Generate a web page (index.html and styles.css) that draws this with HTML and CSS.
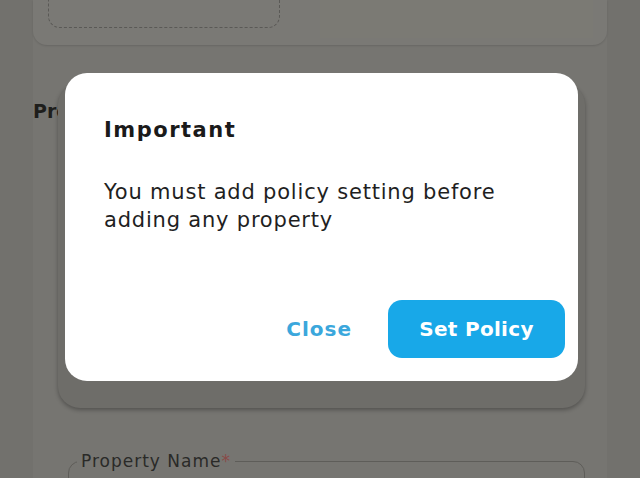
FILE: index.html
```html
<!DOCTYPE html>
<html>
<head>
<meta charset="utf-8">
<link rel="stylesheet" href="styles.css">
</head>
<body>
<div class="page">
  <div class="column">
    <div class="top-card">
      <div class="upload"></div>
      <div class="top-right"></div>
    </div>
    <h2 class="section-title">Property Details</h2>
    <div class="back-card"></div>
    <fieldset class="field">
      <legend>Property Name<span class="req">*</span></legend>
    </fieldset>
  </div>
</div>
<div class="dialog">
  <h3 class="dialog-title">Important</h3>
  <p class="dialog-body">You must add policy setting before adding any property</p>
  <div class="dialog-actions">
    <button class="btn-text">Close</button>
    <button class="btn-primary">Set Policy</button>
  </div>
</div>
</body>
</html>
```
FILE: styles.css
```css
html, body {
  margin: 0;
  padding: 0;
}
body {
  width: 640px;
  height: 478px;
  overflow: hidden;
  background: #72716d;
  font-family: "DejaVu Sans", "Open Sans", sans-serif;
}
.page {
  padding: 0 33px;
  height: 478px;
}
.column {
  background: #767571;
  height: 478px;
  display: flex;
  flex-direction: column;
}
.column > * {
  flex-shrink: 0;
}
.top-card {
  height: 45px;
  background: #7a7975;
  border-radius: 0 0 14px 14px;
  box-shadow: 0 1px 2px rgba(0,0,0,0.12);
  display: flex;
  gap: 40px;
  padding: 0 14px 0 15px;
  box-sizing: border-box;
}
.upload {
  width: 232px;
  height: 32px;
  margin-top: -4px;
  border: 1.5px dashed #5a5956;
  border-radius: 0 0 12px 12px;
  box-sizing: border-box;
}
.top-right {
  flex: 1;
  height: 38px;
  background: #7b7a74;
}
.section-title {
  margin: 54px 0 0 0;
  font-size: 19px;
  font-weight: 700;
  color: #1e1e1c;
  line-height: 24px;
}
.back-card {
  margin: -40px 22px 0 25px;
  height: 325px;
  border-radius: 22px;
  background: #6e6d69;
  box-shadow: 0 2px 4px rgba(0,0,0,0.3);
}
.field {
  margin: 43px 22px 0 35px;
  padding: 0;
  height: 40px;
  border: 1px solid #5e5d59;
  border-radius: 12px;
}
.field legend {
  margin-left: 8px;
  padding: 0 4px;
  font-size: 17px;
  letter-spacing: 1px;
  color: #2a2a28;
}
.req { color: #8a4a48; }

.dialog {
  position: absolute;
  left: 65px;
  top: 73px;
  width: 513px;
  height: 308px;
  box-sizing: border-box;
  background: #ffffff;
  border-radius: 22px;
  padding: 44px 13px 23px 39px;
  display: flex;
  flex-direction: column;
}
.dialog-title {
  margin: 0;
  font-size: 21px;
  line-height: 26px;
  font-weight: 700;
  letter-spacing: 1.5px;
  color: #1a1a1a;
}
.dialog-body {
  margin: 35px 20px 0 0;
  font-size: 21px;
  line-height: 28px;
  letter-spacing: 0.8px;
  color: #1f1f1f;
}
.dialog-actions {
  margin-top: auto;
  display: flex;
  justify-content: flex-end;
  align-items: center;
  gap: 36px;
}
.btn-text {
  border: none;
  background: none;
  font-family: inherit;
  font-size: 20px;
  font-weight: 700;
  letter-spacing: 1px;
  color: #3ba7dc;
  padding: 0;
}
.btn-primary {
  width: 177px;
  height: 58px;
  border: none;
  border-radius: 14px;
  background: #18a8e8;
  color: #ffffff;
  font-family: inherit;
  font-size: 20px;
  font-weight: 700;
  letter-spacing: 0.3px;
}
```
